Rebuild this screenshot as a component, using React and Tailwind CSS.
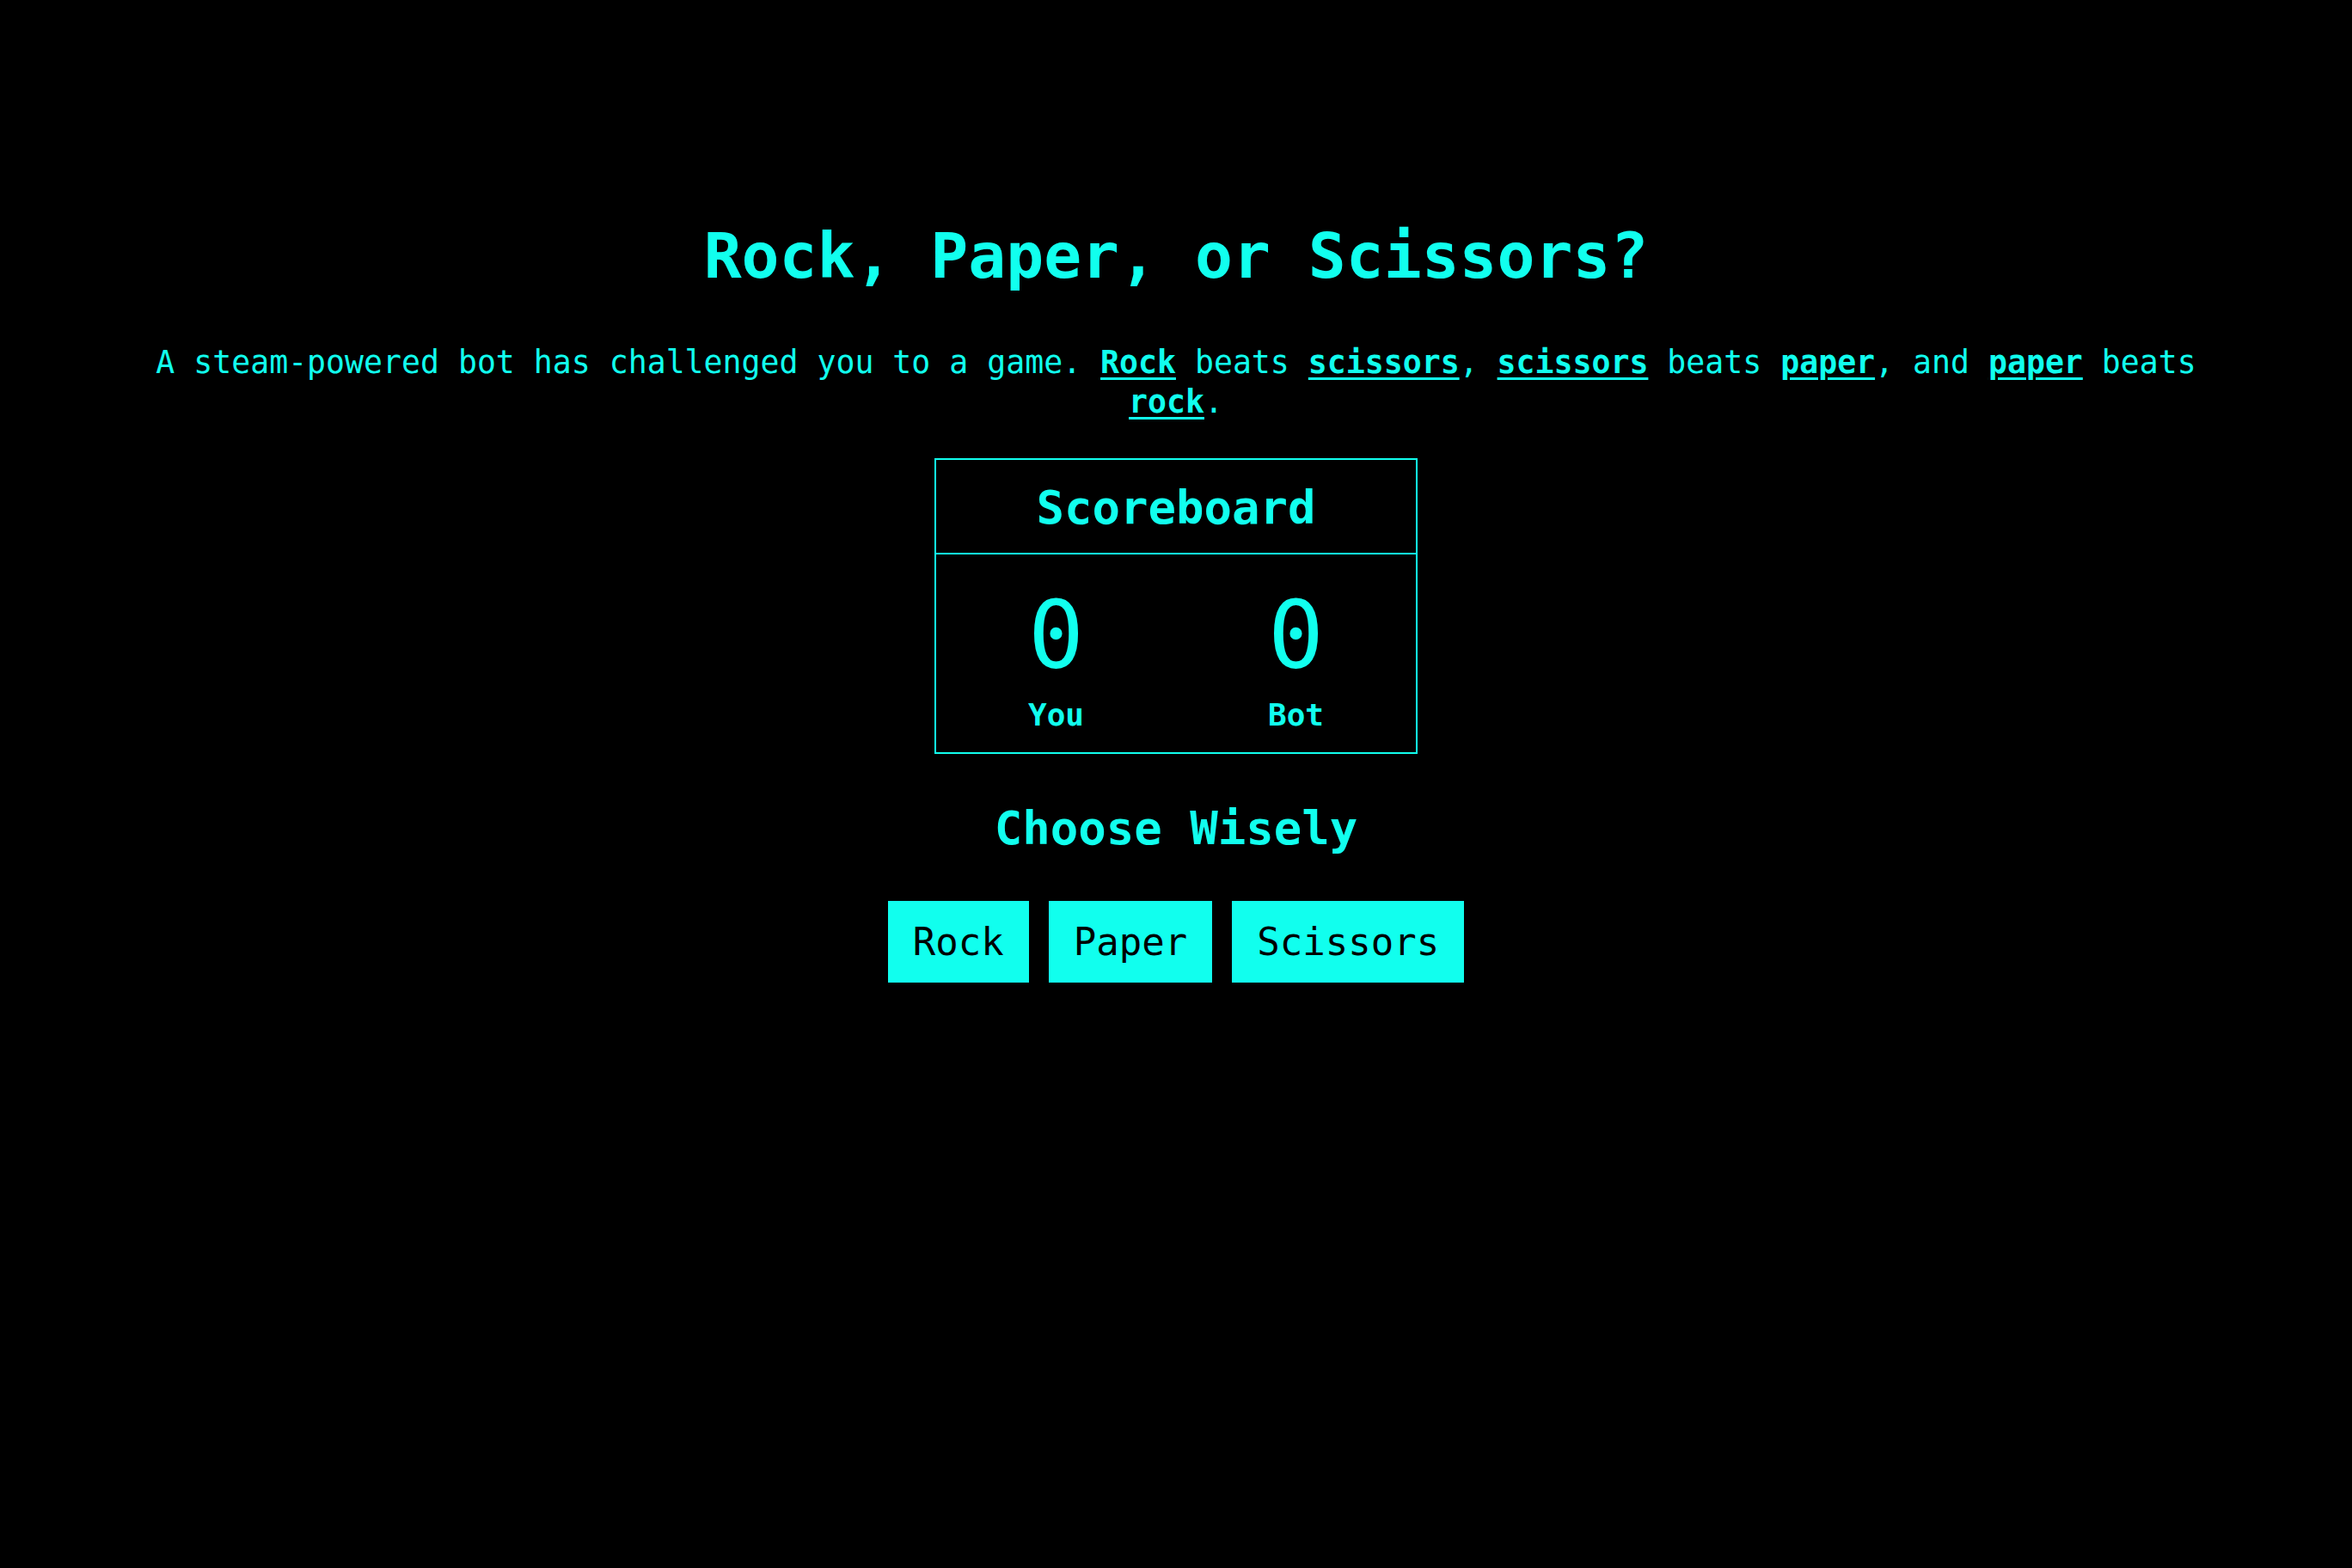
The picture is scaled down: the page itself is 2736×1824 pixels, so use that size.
import { useState } from "react";

const choices = ["Rock", "Paper", "Scissors"];

function Term({ children }) {
  return (
    <a href="#" className="font-bold underline decoration-[3px] underline-offset-[5px]">
      {children}
    </a>
  );
}

export default function App() {
  const [score, setScore] = useState({ you: 0, bot: 0 });

  const play = (choice) => {
    const bot = choices[Math.floor(Math.random() * 3)];
    const i = choices.indexOf(choice);
    const j = choices.indexOf(bot);
    if (i === j) return;
    if ((i + 2) % 3 === j) setScore((s) => ({ ...s, you: s.you + 1 }));
    else setScore((s) => ({ ...s, bot: s.bot + 1 }));
  };

  return (
    <div className="min-h-screen bg-black text-[#11ffee] font-['DejaVu_Sans_Mono',monospace] text-[36px]">
      <div className="flex flex-col items-center pt-[256px] px-[140px]">
        <h1 className="text-[73px] font-bold leading-[84px]">Rock, Paper, or Scissors?</h1>

        <p className="mt-[59px] text-center text-[36.5px] leading-[46px]">
          A steam-powered bot has challenged you to a game. <Term>Rock</Term> beats{" "}
          <Term>scissors</Term>, <Term>scissors</Term> beats <Term>paper</Term>, and{" "}
          <Term>paper</Term> beats <Term>rock</Term>.
        </p>

        <div className="mt-[42px] w-[562px] border-2 border-[#11ffee]">
          <div className="border-b-2 border-[#11ffee] pt-[24px] pb-[21px] text-center text-[54px] font-bold leading-[63px]">
            Scoreboard
          </div>
          <div className="grid grid-cols-2 pt-[31px] pb-[22px]">
            <div className="flex flex-col items-center">
              <span className="text-[108px] leading-[126px]">{score.you}</span>
              <span className="mt-[9px] font-bold leading-[42px]">You</span>
            </div>
            <div className="flex flex-col items-center">
              <span className="text-[108px] leading-[126px]">{score.bot}</span>
              <span className="mt-[9px] font-bold leading-[42px]">Bot</span>
            </div>
          </div>
        </div>

        <h2 className="mt-[55px] text-[54px] font-bold leading-[63px]">Choose Wisely</h2>

        <div className="mt-[53px] flex gap-[23px]">
          {choices.map((c) => (
            <button
              key={c}
              onClick={() => play(c)}
              className="h-[95px] px-[29px] bg-[#11ffee] text-black text-[44px] leading-[51px] flex items-center"
            >
              {c}
            </button>
          ))}
        </div>
      </div>
    </div>
  );
}
